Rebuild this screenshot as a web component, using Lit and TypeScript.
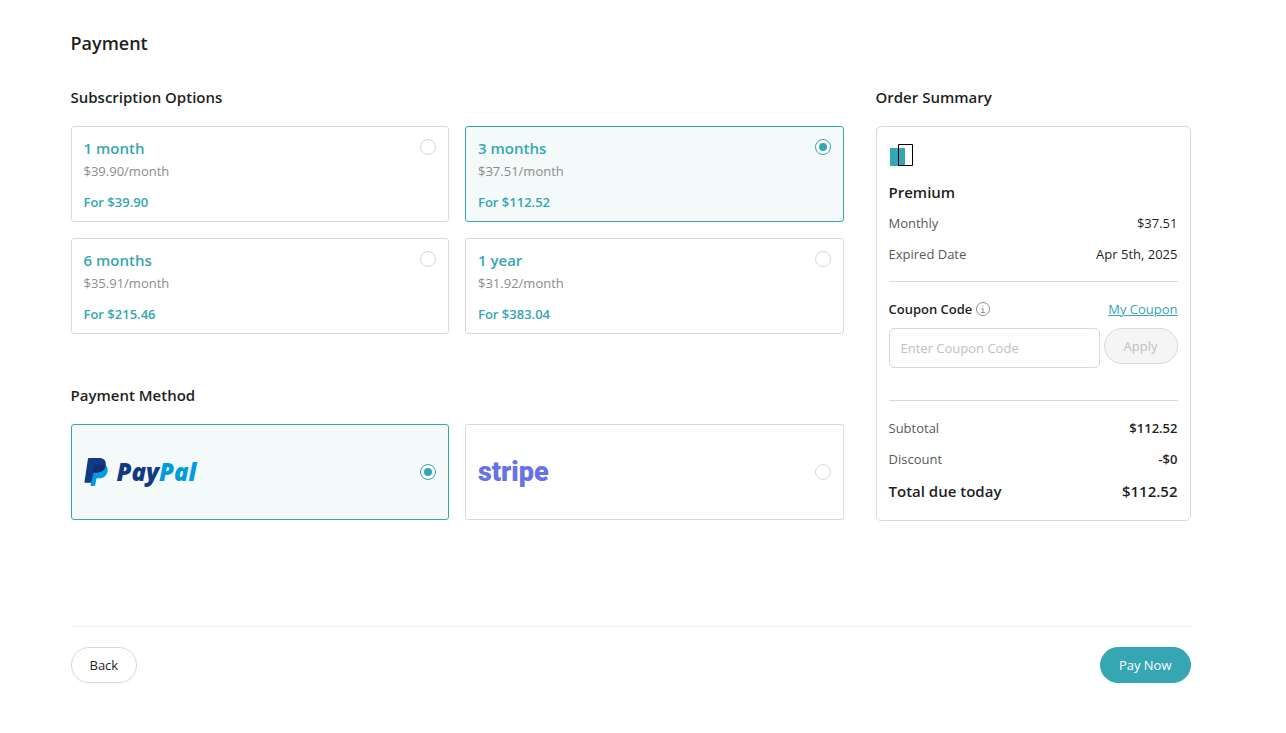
import { LitElement, html, css } from "lit";
import { customElement, state } from "lit/decorators.js";

interface Plan {
  id: string;
  name: string;
  price: string;
  total: string;
}

const PLANS: Plan[] = [
  { id: "m1", name: "1 month", price: "$39.90/month", total: "For $39.90" },
  { id: "m3", name: "3 months", price: "$37.51/month", total: "For $112.52" },
  { id: "m6", name: "6 months", price: "$35.91/month", total: "For $215.46" },
  { id: "y1", name: "1 year", price: "$31.92/month", total: "For $383.04" },
];

@customElement("app-root")
export class AppRoot extends LitElement {
  @state() private plan = "m3";
  @state() private method = "paypal";

  static styles = css`
    :host {
      display: block;
      box-sizing: border-box;
      padding: 29px 25px 48px 0;
      background: #fff;
      color: #1f1f1f;
      font: 400 13px/22px "Segoe UI", "Open Sans", "Noto Sans", sans-serif;
    }
    *, *::before { box-sizing: border-box; }
    .page { max-width: 1120px; margin: 0 auto; }
    h1, h2, h3, p, dl, dd, fieldset { margin: 0; padding: 0; border: 0; }
    h1 { font-size: 18px; line-height: 28px; font-weight: 600; margin-bottom: 29px; }
    .heading {
      display: block;
      padding: 0;
      margin-bottom: 18px;
      font-size: 15px;
      line-height: 22px;
      font-weight: 600;
    }
    .columns { display: grid; grid-template-columns: minmax(0, 1fr) 315px; gap: 32px; align-items: start; }
    .left { display: grid; gap: 50px; }
    fieldset { min-width: 0; }
    .cards { display: grid; grid-template-columns: 1fr 1fr; gap: 16px; }
    .card {
      display: flex;
      justify-content: space-between;
      min-height: 96px;
      padding: 10px 12px 8px;
      border: 1px solid #d9d9d9;
      border-radius: 3px;
      cursor: pointer;
    }
    .card:has(input:checked) { border-color: #36a6b3; background: #f4fafa; }
    .card.pay { align-items: center; padding: 0 12px; }
    .info { display: grid; color: #36a6b3; font-weight: 600; }
    .name { font-size: 15px; line-height: 22px; }
    .price { line-height: 24px; color: #8c8c8c; font-weight: 400; margin-bottom: 8px; }
    input[type="radio"] {
      appearance: none;
      flex: none;
      width: 16px;
      height: 16px;
      margin: 2px 0 0;
      border: 1px solid #d9d9d9;
      border-radius: 50%;
      background: #fff;
      display: grid;
      place-items: center;
    }
    .pay input[type="radio"] { margin: 0; }
    input[type="radio"]:checked { border-color: #36a6b3; }
    input[type="radio"]:checked::before {
      content: "";
      width: 8px;
      height: 8px;
      border-radius: 50%;
      background: #36a6b3;
    }
    .paypal { display: flex; align-items: center; gap: 8px; font: italic 800 24px/28px "Open Sans", sans-serif; color: #113984; }
    .paypal svg { display: block; }
    .pal { color: #009cde; }
    .stripe { font: 900 27px/36px Roboto, sans-serif; color: #6772e5; }
    .summary { border: 1px solid #d9d9d9; border-radius: 5px; padding: 16px 12px 17px; }
    .logo { display: block; margin-bottom: 14px; }
    .premium { font-size: 15px; line-height: 22px; font-weight: 600; margin-bottom: 9px; }
    .rows { display: grid; gap: 9px; }
    .row { display: flex; justify-content: space-between; align-items: center; }
    dt { color: #595959; }
    .strong { font-weight: 600; }
    .total, .total dt { font-size: 15px; line-height: 24px; font-weight: 600; color: #1f1f1f; }
    hr { height: 1px; margin: 16px 0; border: 0; background: #d9d9d9; }
    .after-coupon { margin-top: 32px; }
    .coupon-label { display: flex; align-items: center; gap: 4px; font-weight: 600; }
    a { color: #36a6b3; text-decoration: underline; }
    .coupon { display: flex; align-items: flex-start; gap: 4px; margin-top: 8px; }
    .coupon input {
      flex: 1;
      min-width: 0;
      height: 40px;
      padding: 0 11px;
      border: 1px solid #d9d9d9;
      border-radius: 5px;
      font: inherit;
    }
    .coupon input::placeholder { color: #bfbfbf; }
    button {
      height: 36px;
      padding: 0 18px;
      border: 1px solid #d9d9d9;
      border-radius: 18px;
      background: #fff;
      color: #1f1f1f;
      font: inherit;
    }
    button:disabled { padding: 0 19px; background: #f5f5f5; color: #bfbfbf; }
    .back { box-shadow: 0 2px 0 rgba(0, 0, 0, 0.02); }
    .primary { background: #36a6b3; border-color: #36a6b3; color: #fff; }
    footer {
      display: flex;
      justify-content: space-between;
      margin-top: 105px;
      padding-top: 20px;
      border-top: 1px solid #f0f0f0;
    }
  `;

  private renderPlan(p: Plan) {
    return html`<label class="card">
      <span class="info">
        <span class="name">${p.name}</span>
        <span class="price">${p.price}</span>
        <span>${p.total}</span>
      </span>
      <input type="radio" name="plan" .checked=${this.plan === p.id} @change=${() => (this.plan = p.id)} />
    </label>`;
  }

  render() {
    return html`<main class="page">
      <h1>Payment</h1>
      <div class="columns">
        <div class="left">
          <fieldset>
            <legend class="heading">Subscription Options</legend>
            <div class="cards">${PLANS.map((p) => this.renderPlan(p))}</div>
          </fieldset>
          <fieldset>
            <legend class="heading">Payment Method</legend>
            <div class="cards">
              <label class="card pay">
                <span class="paypal">
                  <svg width="25" height="28" viewBox="0 0 25 28" aria-hidden="true">
                    <path fill="#009cde" d="M21.5 7.2c2 1.4 2.6 3.6 2 6.3-.9 4.6-4 6.8-8.400 6.800h-1.600c-.7 0-1.100.400-1.200 1l-1 5.700c-.100.600-.500 1-1.100 1H6.500l2-12.800 5-6.500z" />
                    <path fill="#113984" d="M5.100 0h9.300c2.600 0 4.800.500 6.100 2 1.200 1.400 1.500 3 1.100 5.200-.9 4.800-4 7.200-8.700 7.200h-2.300c-.8 0-1.300.5-1.500 1.200L7.300 24.800H1.300c-.6 0-.9-.4-.8-.9L3.900 1.100C4 .4 4.500 0 5.100 0z" />
                    <path fill="#172c70" d="M21.600 7.200c-.9 4.800-4 7.200-8.700 7.200h-2.300c-.8 0-1.300.5-1.500 1.200l-.7 4L10 8.200c.1-.8.700-1.400 1.500-1.400h7c1.200 0 2.300.1 3.100.4z" />
                  </svg>
                  <span>Pay<span class="pal">Pal</span></span>
                </span>
                <input type="radio" name="method" .checked=${this.method === "paypal"} @change=${() => (this.method = "paypal")} />
              </label>
              <label class="card pay">
                <span class="stripe">stripe</span>
                <input type="radio" name="method" .checked=${this.method === "stripe"} @change=${() => (this.method = "stripe")} />
              </label>
            </div>
          </fieldset>
        </div>
        <section>
          <h2 class="heading">Order Summary</h2>
          <div class="summary">
            <svg class="logo" width="24" height="24" viewBox="0 0 24 24" aria-hidden="true">
              <rect x="1" y="5" width="15" height="18" fill="#36a6b3" />
              <rect x="9" y="1" width="15" height="22" fill="none" stroke="none" />
              <path d="M16 2h7v20h-7z" fill="#fff" />
              <path d="M9.500 1.500h14v21h-14z" fill="none" stroke="#000" />
            </svg>
            <h3 class="premium">Premium</h3>
            <dl class="rows">
              <div class="row"><dt>Monthly</dt><dd>$37.51</dd></div>
              <div class="row"><dt>Expired Date</dt><dd>Apr 5th, 2025</dd></div>
            </dl>
            <hr />
            <div class="row">
              <label class="coupon-label" for="coupon">Coupon Code
                <svg width="14" height="14" viewBox="0 0 14 14" fill="none" stroke="#8c8c8c" aria-hidden="true">
                  <circle cx="7" cy="7" r="6.500" />
                  <path d="M5.500 6.500H7V10M5 10.500h4M6.500 4h1" />
                </svg>
              </label>
              <a href="#coupons">My Coupon</a>
            </div>
            <div class="coupon">
              <input id="coupon" type="text" placeholder="Enter Coupon Code" />
              <button type="button" disabled>Apply</button>
            </div>
            <hr class="after-coupon" />
            <dl class="rows">
              <div class="row"><dt>Subtotal</dt><dd class="strong">$112.52</dd></div>
              <div class="row"><dt>Discount</dt><dd class="strong">-$0</dd></div>
              <div class="row total"><dt>Total due today</dt><dd>$112.52</dd></div>
            </dl>
          </div>
        </section>
      </div>
      <footer>
        <button class="back" type="button">Back</button>
        <button class="primary" type="button">Pay Now</button>
      </footer>
    </main>`;
  }
}
